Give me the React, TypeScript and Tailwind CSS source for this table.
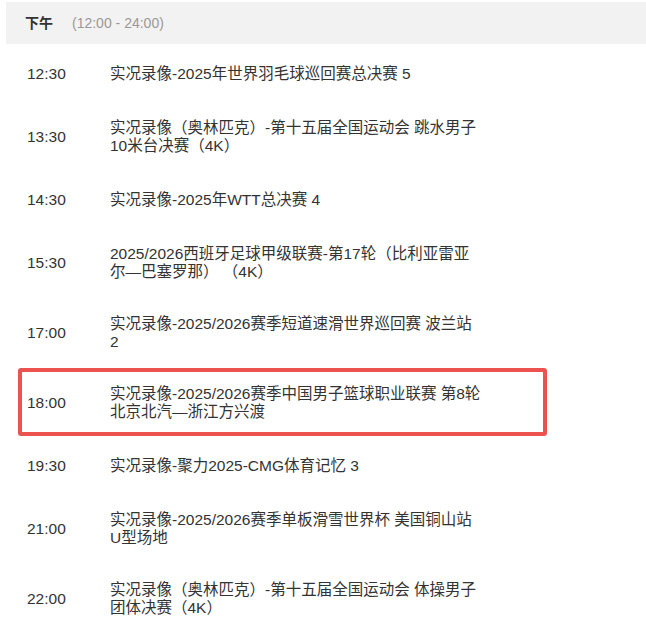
import React from "react";

type Row = { time: string; lines: string[]; highlight?: boolean };

const rows: Row[] = [
  { time: "12:30", lines: ["实况录像-2025年世界羽毛球巡回赛总决赛 5"] },
  { time: "13:30", lines: ["实况录像（奥林匹克）-第十五届全国运动会 跳水男子", "10米台决赛（4K）"] },
  { time: "14:30", lines: ["实况录像-2025年WTT总决赛 4"] },
  { time: "15:30", lines: ["2025/2026西班牙足球甲级联赛-第17轮（比利亚雷亚", "尔—巴塞罗那） （4K）"] },
  { time: "17:00", lines: ["实况录像-2025/2026赛季短道速滑世界巡回赛 波兰站", "2"] },
  { time: "18:00", lines: ["实况录像-2025/2026赛季中国男子篮球职业联赛 第8轮", "北京北汽—浙江方兴渡"], highlight: true },
  { time: "19:30", lines: ["实况录像-聚力2025-CMG体育记忆 3"] },
  { time: "21:00", lines: ["实况录像-2025/2026赛季单板滑雪世界杯 美国铜山站", "U型场地"] },
  { time: "22:00", lines: ["实况录像（奥林匹克）-第十五届全国运动会 体操男子", "团体决赛（4K）"] },
];

export default function App() {
  return (
    <div
      className="w-[646px] h-[626px] overflow-hidden bg-white text-[#333]"
      style={{ fontFamily: '"Liberation Sans", "Noto Sans CJK SC", sans-serif' }}
    >
      <div className="ml-[6px] mt-[2px] h-[42px] bg-[#f2f2f2] flex items-center pl-[19px] text-[14px]">
        <span className="font-bold text-[#333]">下午</span>
        <span className="ml-[19px] text-[#999]">(12:00 - 24:00)</span>
      </div>
      <div className="mt-[2px]">
        {rows.map((r) => (
          <div key={r.time} className="relative flex items-center min-h-[56px] py-[17px] pl-[27px] text-[15.5px] leading-[18px]">
            <div className="w-[83px] shrink-0">{r.time}</div>
            <div className="whitespace-pre">
              {r.lines.map((l, i) => (
                <div key={i}>{l}</div>
              ))}
            </div>
            {r.highlight && (
              <div className="absolute left-[18px] top-0 w-[529px] h-[68px] border-[4px] border-[#ec5350] rounded-[3px]" />
            )}
          </div>
        ))}
      </div>
    </div>
  );
}
